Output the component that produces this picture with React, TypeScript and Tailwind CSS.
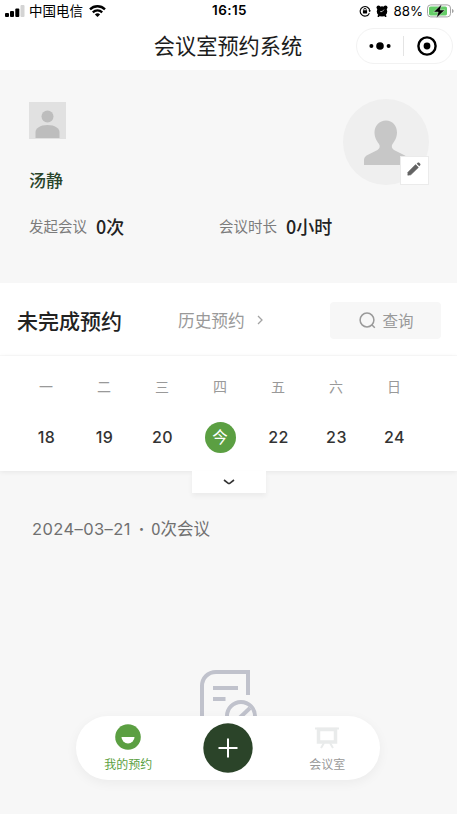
type Day = { week: string; date: string; today?: boolean };

const days: Day[] = [
  { week: "一", date: "18" },
  { week: "二", date: "19" },
  { week: "三", date: "20" },
  { week: "四", date: "今", today: true },
  { week: "五", date: "22" },
  { week: "六", date: "23" },
  { week: "日", date: "24" },
];

function StatusBar() {
  return (
    <div className="grid h-[21px] grid-cols-[1fr_auto_1fr] items-center pr-[3px] pl-[5px] text-black">
      <div className="flex items-center">
        <svg width="20" height="12" viewBox="0 0 20 12">
          <rect x="0" y="8" width="4" height="4" rx="1" />
          <rect x="5" y="6" width="4" height="6" rx="1" />
          <rect x="10.3" y="3.5" width="4" height="8.5" rx="1" />
          <rect x="15.5" y="0" width="4" height="12" rx="1" fill="#d4d4d4" />
        </svg>
        <span className="-mt-0.5 ml-1 text-[13.5px] leading-5">中国电信</span>
        <svg className="ml-1.5" width="17" height="12" viewBox="0 0 17 12" fill="none" stroke="black" strokeWidth="2.3">
          <path d="M1 4.4C5.2.2 11.8.2 16 4.4" />
          <path d="M3.8 7.3c2.7-2.6 6.7-2.6 9.4 0" />
          <path d="M8.5 12 5.9 9.4c1.5-1.4 3.7-1.4 5.2 0z" fill="black" stroke="none" />
        </svg>
      </div>
      <span className="font-[Inter] text-[13.5px] font-semibold tracking-[0.4px]">16:15</span>
      <div className="flex items-center justify-end">
        <svg width="12" height="12" viewBox="0 0 12 12" fill="none" stroke="black" strokeWidth="1.1">
          <path d="M10.4 8.2A4.8 4.8 0 1 1 10.8 6" />
          <path d="m9.3 5.6 1.5 1.7 1.1-1.9z" fill="black" stroke="none" />
          <path d="M4.8 5.6V4.5a1.2 1.2 0 0 1 2.4 0v1.1" strokeWidth="0.9" />
          <rect x="3.9" y="5.3" width="4.2" height="3.2" rx=".4" fill="black" stroke="none" />
        </svg>
        <svg className="ml-[5px]" width="12" height="12" viewBox="0 0 12 12">
          <circle cx="6" cy="6.4" r="5.2" />
          <circle cx="2.5" cy="2.5" r="2" />
          <circle cx="9.5" cy="2.5" r="2" />
          <path d="m2 11.8 1.5-2M10 11.8l-1.5-2" stroke="black" strokeWidth="1.8" />
          <path d="M8 4.6 6.1 6.6H4.2" stroke="white" strokeWidth=".7" fill="none" />
        </svg>
        <span className="ml-[5px] font-[Inter] text-[13.3px] leading-5">88%</span>
        <svg className="ml-1" width="27" height="14" viewBox="0 0 27 14">
          <rect x=".5" y=".9" width="23" height="12" rx="3.2" fill="white" stroke="#a3a3a3" />
          <rect x="2" y="2.4" width="18" height="9" rx="1.6" fill="#65cd68" />
          <path d="M25 5v4c1-.3 1.6-1 1.6-2S26 5.3 25 5z" fill="#a3a3a3" />
          <path d="M14.6.2 6.6 8h4.600l-1.8 6L17.800 6h-4.600z" fill="black" stroke="white" strokeWidth=".4" />
        </svg>
      </div>
    </div>
  );
}

function NavBar() {
  return (
    <header className="grid h-[49px] grid-cols-[1fr_auto_1fr] items-center pr-1">
      <h1 className="col-start-2 -mt-0.5 ml-[3px] text-[21.2px] leading-7 text-[#1c1c1c]">会议室预约系统</h1>
      <div className="flex h-9 w-[97px] items-center justify-self-end rounded-full border border-[#f2f2f2]">
        <button type="button" aria-label="更多" className="flex flex-1 items-center justify-center">
          <svg width="22" height="8" viewBox="0 0 22 8">
            <circle cx="2.4" cy="4" r="2" />
            <circle cx="11" cy="4" r="3.8" />
            <circle cx="19.6" cy="4" r="2" />
          </svg>
        </button>
        <span className="h-5 w-px bg-[#e4e4e4]" />
        <button type="button" aria-label="关闭" className="flex flex-1 items-center justify-center pr-0.5">
          <svg width="20" height="20" viewBox="0 0 20 20">
            <circle cx="10" cy="10" r="8.6" fill="none" stroke="black" strokeWidth="2.4" />
            <circle cx="10" cy="10" r="3.4" />
          </svg>
        </button>
      </div>
    </header>
  );
}

function Profile() {
  return (
    <section className="h-[213px] bg-[#f7f7f7] pt-[29px] pr-7 pl-[29px]">
      <div className="flex h-[94px] justify-between">
        <div>
          <svg className="mt-[3px]" width="37" height="37" viewBox="0 0 37 37">
            <rect width="37" height="37" fill="#e1e1e1" />
            <circle cx="18.5" cy="14.5" r="6" fill="#bdbdbd" />
            <path d="M6.5 36v-6c0-3.5 4.5-7 12-7s12 3.5 12 7v6z" fill="#bdbdbd" />
          </svg>
          <p className="mt-[29px] text-[17px] leading-6 font-medium text-[#2a452b]">汤静</p>
        </div>
        <div className="relative size-[86px]">
          <svg width="86" height="86" viewBox="0 0 86 86">
            <circle cx="43" cy="43" r="43" fill="#efefef" />
            <path
              d="M43 21.5c6.5 0 11 5 11 12 0 5-2.5 9-4.5 11.5-1.5 2.5-.5 4.500 1.5 6l11 5.5c2 1.5 2.5 3 2.5 5v4.5h-43.5v-4.5c0-2 .5-3.500 2.500-5l11-5.5c2-1.500 3-3.500 1.500-6-2-2.500-4.500-6.500-4.500-11.500 0-7 5-12 11.500-12z"
              fill="#c7c7c7"
            />
          </svg>
          <button
            type="button"
            aria-label="编辑"
            className="absolute right-0 bottom-0 flex size-[29px] items-center justify-center border border-[#ebebeb] bg-white pr-px pb-[3px]">
            <svg width="14" height="14" viewBox="0 0 14 14" fill="#636363">
              <path d="M.8 13.2 1 10.2 8.6 2.6l2.8 2.8-7.6 7.4z" stroke="#636363" strokeWidth=".6" />
              <path d="m9.7 1.7 1-.9c.5-.4 1-.4 1.5 0l1 1c.4.5.4 1 0 1.5l-.9 1z" />
            </svg>
          </button>
        </div>
      </div>
      <div className="mt-[21px] grid grid-cols-[190px_1fr] leading-6">
        <p className="flex items-center">
          <span className="text-[14.5px] text-[#7c7c7c]">发起会议</span>
          <span className="-mt-px ml-[9px] text-[18px] font-medium text-[#222]">0次</span>
        </p>
        <p className="flex items-center">
          <span className="text-[14.5px] text-[#7c7c7c]">会议时长</span>
          <span className="-mt-px ml-[9px] text-[18px] font-medium text-[#222]">0小时</span>
        </p>
      </div>
    </section>
  );
}

function Toolbar() {
  return (
    <div className="flex h-[73px] items-center border-b border-[#fafafa] pt-[3px] pr-4 pl-[17px]">
      <h2 className="-mt-0.5 text-[21px] leading-7 font-medium text-[#222]">未完成预约</h2>
      <button type="button" className="-mt-0.5 ml-14 flex items-center text-[16.7px] leading-6 text-[#999]">
        历史预约
        <svg className="ml-3" width="6" height="10" viewBox="0 0 6 10" fill="none" stroke="#a3a3a3" strokeWidth="1.3">
          <path d="m1 1 4 4-4 4" />
        </svg>
      </button>
      <button
        type="button"
        className="ml-auto flex h-[37px] w-[111px] items-center justify-center gap-1.5 rounded bg-[#f7f7f7] pl-0.5 text-[15.5px] text-[#9a9a9a]">
        <svg width="17" height="17" viewBox="0 0 17 17" fill="none" stroke="#9a9a9a" strokeWidth="1.5">
          <circle cx="8" cy="8" r="6.9" />
          <path d="m12.8 12.8 3 3" />
        </svg>
        查询
      </button>
    </div>
  );
}

function Calendar() {
  return (
    <section className="relative h-[115px] bg-white shadow-[0_1px_5px_rgba(0,0,0,0.07)]">
      <div className="grid grid-cols-[repeat(7,58px)] pt-[18px] pl-[17px] text-center">
        {days.map((day) => (
          <div key={day.week} className="flex flex-col items-center">
            <span className="text-[14px] leading-6 text-[#999]">{day.week}</span>
            <span
              className={`mt-6 flex size-[31px] items-center justify-center rounded-full ${
                day.today
                  ? "bg-[#5b9f42] pb-px text-[15.5px] text-white"
                  : "pb-px pl-px font-[Inter] text-[16px] font-medium tracking-[0.5px] text-[#333]"
              }`}>
              {day.date}
            </span>
          </div>
        ))}
      </div>
      <button
        type="button"
        aria-label="展开"
        className="absolute top-full left-48 flex h-[22px] w-[74px] items-center justify-center bg-white shadow-[0_3px_5px_rgba(0,0,0,0.05)]">
        <svg width="12" height="6" viewBox="0 0 12 6" fill="none" stroke="#333" strokeWidth="1.6">
          <path d="M1 1 5 4.1c.6.5 1.4.5 2 0L11 1" />
        </svg>
      </button>
    </section>
  );
}

function EmptyIcon() {
  return (
    <svg width="58" height="66" viewBox="0 0 58 66" fill="none" stroke="#c0c2cc" strokeWidth="4">
      <path d="M3 66V16C3 8 9 2 17 2h32v23" />
      <path d="M14 18h25M14 29h12.5" />
      <circle cx="42" cy="46" r="14" />
      <path d="m32 56 19-18" />
    </svg>
  );
}

function TabBar() {
  return (
    <nav className="absolute bottom-[34px] left-[76px] grid h-16 w-[304px] grid-cols-3 rounded-full bg-white text-[12px] shadow-[0_3px_12px_rgba(0,0,0,0.05)]">
      <button type="button" className="flex flex-col items-center pt-2 pl-[3px] text-[#5b9f42]">
        <svg width="26" height="26" viewBox="0 0 26 26">
          <circle cx="13" cy="13" r="12.8" fill="#5b9f42" />
          <path d="M6.5 13h13a6.5 6.5 0 0 1-13 0z" fill="white" />
        </svg>
        <span className="mt-1.5 leading-4">我的预约</span>
      </button>
      <button type="button" aria-label="新建预约" className="flex items-center justify-center">
        <svg width="50" height="50" viewBox="0 0 50 50">
          <circle cx="25" cy="25" r="24.7" fill="#2b4429" />
          <path d="M15.5 25h19M25 15.5v19" stroke="white" strokeWidth="2" />
        </svg>
      </button>
      <button type="button" className="flex flex-col items-center pt-[11px] pr-1 text-[#999]">
        <svg width="24" height="22" viewBox="0 0 24 22" fill="none" stroke="#e9ebeb" strokeWidth="2">
          <path d="M0 1.5h24" />
          <rect x="3.5" y="2.5" width="17" height="12.5" strokeWidth="3.5" />
          <path d="m9 16-3 5M15 16l3 5" />
        </svg>
        <span className="mt-[7px] leading-4">会议室</span>
      </button>
    </nav>
  );
}

export default function App() {
  return (
    <div className="relative flex h-[814px] w-full flex-col overflow-hidden bg-white font-['Noto_Sans_CJK_SC',sans-serif]">
      <StatusBar />
      <NavBar />
      <Profile />
      <Toolbar />
      <Calendar />
      <main className="flex flex-1 flex-col bg-[#f7f7f7] pt-[46px]">
        <p className="flex items-center pl-8 text-[16.5px] leading-6 text-[#707070]">
          <span className="font-[Inter] tracking-[0.4px]">2024–03–21</span>
          <span className="mr-[7px] ml-2 font-[Inter] font-bold">·</span>
          <span className="-mt-0.5">0次会议</span>
        </p>
        <div className="mt-[129px] flex justify-center pr-0.5">
          <EmptyIcon />
        </div>
      </main>
      <TabBar />
    </div>
  );
}
